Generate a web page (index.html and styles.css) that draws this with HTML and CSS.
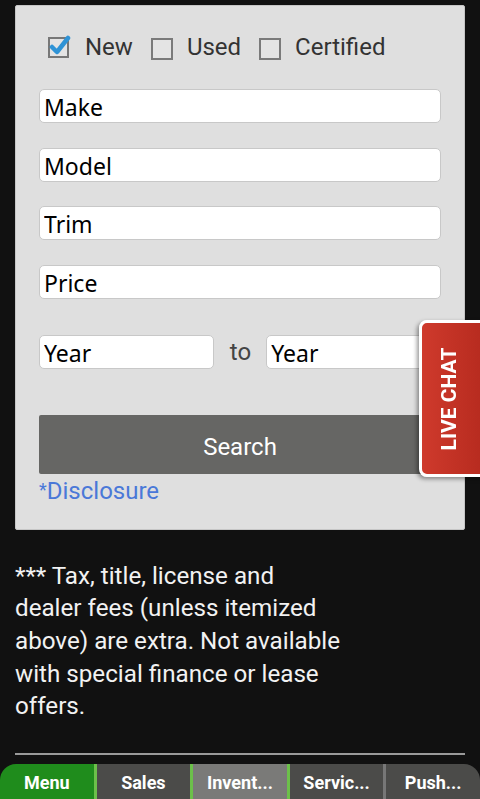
FILE: index.html
```html
<!DOCTYPE html>
<html lang="en">
<head>
  <meta charset="UTF-8" />
  <title>Inventory Search</title>
  <link rel="stylesheet" href="styles.css">
</head>
<body>

<div class="panel">
  <div class="checks">
    <label class="check">
      <svg class="box" width="24" height="24" viewBox="0 0 24 24">
        <rect x="2" y="3" width="19" height="19" fill="#e4e4e4" stroke="#777" stroke-width="2"/>
        <path d="M5 12 L10 17 L21 3" fill="none" stroke="#2f93d6" stroke-width="4.5" stroke-linecap="round" stroke-linejoin="round"/>
      </svg>
      <span>New</span>
    </label>
    <label class="check">
      <span class="box empty"></span>
      <span>Used</span>
    </label>
    <label class="check">
      <span class="box empty"></span>
      <span>Certified</span>
    </label>
  </div>

  <input class="field" placeholder="Make" />
  <input class="field" placeholder="Model" />
  <input class="field" placeholder="Trim" />
  <input class="field" placeholder="Price" />

  <div class="years">
    <input class="field year" placeholder="Year" />
    <span class="to">to</span>
    <input class="field year" placeholder="Year" />
  </div>

  <button class="search">Search</button>
  <a class="disclosure" href="#"><span class="star">*</span>Disclosure</a>
</div>

<p class="note">*** Tax, title, license and dealer fees (unless itemized above) are extra. Not available with special finance or lease offers.</p>

<hr class="rule" />

<div class="nav">
  <div class="tab menu">Menu</div>
  <div class="tab sep-green">Sales</div>
  <div class="tab active sep-green">Invent...</div>
  <div class="tab sep-green">Servic...</div>
  <div class="tab last sep-gray">Push...</div>
</div>

<div class="livechat"><span>LIVE CHAT</span></div>

</body>
</html>
```

FILE: styles.css
```css
body {
  margin: 0;
  background: #111;
  font-family: Roboto, "Noto Sans", sans-serif;
  overflow: hidden;
}
.panel {
  margin: 5px 15px 0;
  padding: 30px 23px 24px;
  background: #dfdfdf;
  border: 1px solid #c6c6c6;
  border-radius: 2px;
}
.checks {
  display: flex;
  align-items: center;
  height: 22px;
  margin: 0 0 31px 8px;
  font-size: 24px;
  color: #333;
}
.check {
  display: flex;
  align-items: center;
  margin-right: 16px;
}
.check .box {
  margin-right: 14px;
}
.box.empty {
  display: inline-block;
  width: 18px;
  height: 18px;
  border: 2px solid #7a7a7a;
  background: #e4e4e4;
  margin-top: 3px;
  margin-left: 2px;
}
.field {
  display: block;
  width: 100%;
  height: 34px;
  box-sizing: border-box;
  margin: 0 0 24.5px;
  padding: 2px 4px 0;
  border: 1px solid #c8c8c8;
  border-radius: 5px;
  background: #fff;
  font-family: "Noto Sans", "Open Sans", sans-serif;
  font-size: 23px;
  color: #000;
}
.field::placeholder {
  color: #000;
}
.years {
  display: flex;
  align-items: center;
  margin-top: 36px;
}
.year {
  flex: 1;
  min-width: 0;
  margin: 0;
}
.to {
  margin: 0 15px 0 16px;
  font-size: 24px;
  color: #444;
}
.search {
  display: block;
  width: 100%;
  height: 59px;
  margin-top: 46px;
  padding-top: 6px;
  border: none;
  border-radius: 2px;
  background: #666664;
  color: #fff;
  font-family: Roboto, sans-serif;
  font-size: 24px;
}
.disclosure {
  display: block;
  margin-top: 2px;
  line-height: 28px;
  font-size: 24px;
  color: #4a78d8;
  text-decoration: none;
}
.star {
  font-size: 18px;
  vertical-align: 3px;
}
.note {
  width: 330px;
  margin: 30px 15px 0;
  font-size: 24.2px;
  line-height: 32.7px;
  color: #f2f2f2;
}
.rule {
  margin: 30px 15px 0;
  border: none;
  height: 2px;
  background: #9a9a9a;
}
.nav {
  display: flex;
  margin-top: 9px;
  height: 36px;
}
.tab {
  flex: 1;
  display: flex;
  align-items: center;
  justify-content: center;
  background: #4b4b49;
  color: #fff;
  font-weight: bold;
  font-size: 18px;
  border-left: 3px solid #111;
}
.tab.menu {
  background: #1f8c1c;
  border-left: none;
  border-top-left-radius: 16px;
}
.tab.active {
  background: #7a7a78;
}
.tab.last {
  border-top-right-radius: 16px;
}
.sep-green {
  border-left-color: #6cc04a;
}
.sep-gray {
  border-left-color: #777;
}
.livechat {
  position: fixed;
  top: 320px;
  right: -10px;
  width: 65px;
  height: 151px;
  display: flex;
  align-items: center;
  justify-content: center;
  background: linear-gradient(to right, #cf3a2c, #b52a1e);
  border: 3px solid #fff;
  border-radius: 8px;
  box-shadow: -2px 2px 4px rgba(0, 0, 0, 0.4);
}
.livechat span {
  transform: rotate(-90deg);
  white-space: nowrap;
  color: #fff;
  font-weight: bold;
  font-size: 21px;
  margin-right: 10px;
}
```
